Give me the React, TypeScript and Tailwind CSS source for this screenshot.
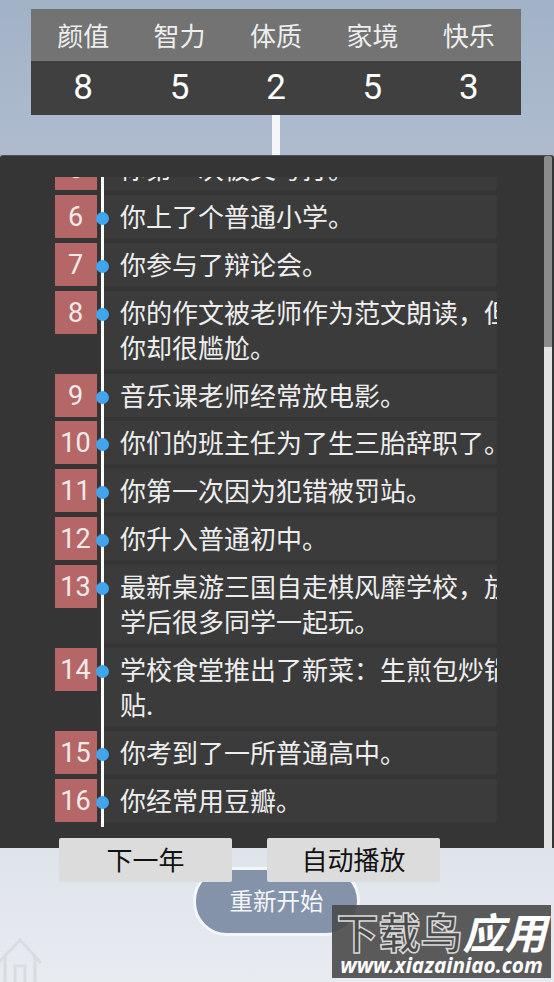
const cjk = "font-['Noto_Sans_CJK_SC','Noto_Sans',sans-serif]";

const stats = [
  ["颜值", "8"],
  ["智力", "5"],
  ["体质", "2"],
  ["家境", "5"],
  ["快乐", "3"],
];

const rows: [number, string[]][] = [
  [5, ["你第一次被父母打。"]],
  [6, ["你上了个普通小学。"]],
  [7, ["你参与了辩论会。"]],
  [8, ["你的作文被老师作为范文朗读，但", "你却很尴尬。"]],
  [9, ["音乐课老师经常放电影。"]],
  [10, ["你们的班主任为了生三胎辞职了。"]],
  [11, ["你第一次因为犯错被罚站。"]],
  [12, ["你升入普通初中。"]],
  [13, ["最新桌游三国自走棋风靡学校，放", "学后很多同学一起玩。"]],
  [14, ["学校食堂推出了新菜：生煎包炒锅", "贴."]],
  [15, ["你考到了一所普通高中。"]],
  [16, ["你经常用豆瓣。"]],
];

function Row({ n, lines }: { n: number; lines: string[] }) {
  return (
    <div className="flex items-start pl-[55px] mb-[4.9px] relative">
      <div className="w-[42px] h-[43px] pr-[1px] shrink-0 bg-[#b56767] text-[#f2eaea] text-[27px] leading-[45px] text-center font-['Roboto',sans-serif]">
        {n}
      </div>
      <div className="absolute left-[96px] top-[17px] w-[13px] h-[13px] rounded-full bg-[#41a5ee] z-20" />
      <div className="ml-[7px] w-[393px] pl-[16px] pt-[3px] pb-[5px] bg-[#3b3b3b] overflow-hidden">
        {lines.map((l) => (
          <div key={l} className="whitespace-nowrap h-[35px] leading-[35px] text-[26px] text-[#eeeeee]">
            {l}
          </div>
        ))}
      </div>
    </div>
  );
}

export default function App() {
  return (
    <div className={`relative w-[554px] h-[982px] overflow-hidden bg-gradient-to-b from-[#a2b2c6] via-[#c6d0dd] to-[#e8ebf0] ${cjk}`}>
      <div className="pt-[9px] pl-[31px]">
        <div className="w-[490px]">
          <div className="flex h-[52px] px-[4px] bg-[#737373]">
            {stats.map(([k]) => (
              <div key={k} className="flex-1 text-center text-[26px] leading-[52px] text-[#eeeeee]">{k}</div>
            ))}
          </div>
          <div className="flex h-[54px] px-[4px] bg-[#404040]">
            {stats.map(([k, v]) => (
              <div key={k} className="flex-1 text-center text-[35px] leading-[54px] text-white font-['Roboto',sans-serif]">{v}</div>
            ))}
          </div>
        </div>
      </div>
      <div className="ml-[272px] w-[8px] h-[40px] bg-[#f4f6f8]" />

      <div className="h-[693px] bg-[#353535] rounded-t-[3px] flex border-t border-[#4a5058]">
        <div className="w-[544px] pt-[21px]">
          <div className="relative h-[650px] overflow-hidden">
            <div className="absolute left-[101px] top-0 bottom-0 w-[3px] bg-white z-10" />
            <div className="mt-[-30px]">
              {rows.map(([n, lines]) => (
                <Row key={n} n={n} lines={lines} />
              ))}
            </div>
          </div>
        </div>
        <div className="w-[8px] flex flex-col">
          <div className="h-[191px] bg-[#8c8c8c] rounded-t-[2px]" />
          <div className="flex-1 bg-[#e3e3e3]" />
        </div>
      </div>

      <div className="relative z-10 mt-[-10px] flex pl-[59px] gap-[35px]">
        <div className="w-[173px] h-[44px] rounded-[2px] bg-[#dcdcdc] text-center text-[26px] leading-[42px] text-[#111111]">下一年</div>
        <div className="w-[173px] h-[44px] rounded-[2px] bg-[#dcdcdc] text-center text-[26px] leading-[42px] text-[#111111]">自动播放</div>
      </div>

      <div className="mt-[-15px] ml-[193px] w-[167px] h-[69px] rounded-[34px] border-[3px] border-[#f4f6f9] bg-[#8493aa] text-center text-[23.5px] leading-[60px] text-[#f4f6f9]">
        重新开始
      </div>

      <div className="absolute left-[332px] top-[905px] w-[219px] h-[73px] bg-[#4a4a4a]/90 flex flex-col items-center overflow-hidden">
        <div className="flex h-[45px] items-center mt-[3px] font-bold text-[42px] leading-[45px] whitespace-nowrap">
          <span className="text-[#4a4a4a] [-webkit-text-stroke:1.5px_#d8d8d8] font-['Noto_Sans_CJK_SC',sans-serif]">下载鸟</span>
          <span className="text-white italic font-['Noto_Sans_CJK_SC',sans-serif]">应用</span>
        </div>
        <div className="text-white font-bold italic text-[20.8px] leading-[24px] font-['Noto_Sans',sans-serif] whitespace-nowrap">www.xiazainiao.com</div>
      </div>

      <svg className="absolute left-0 top-[938px]" width="44" height="44" viewBox="0 0 44 44" fill="none" stroke="#d9dce1" strokeWidth="3">
        <path d="M-2 25 L20 2 L41 25" />
        <path d="M5 18 V44" />
        <path d="M35 18 V44" />
        <path d="M15 44 V28 H25 V44" />
      </svg>
    </div>
  );
}
